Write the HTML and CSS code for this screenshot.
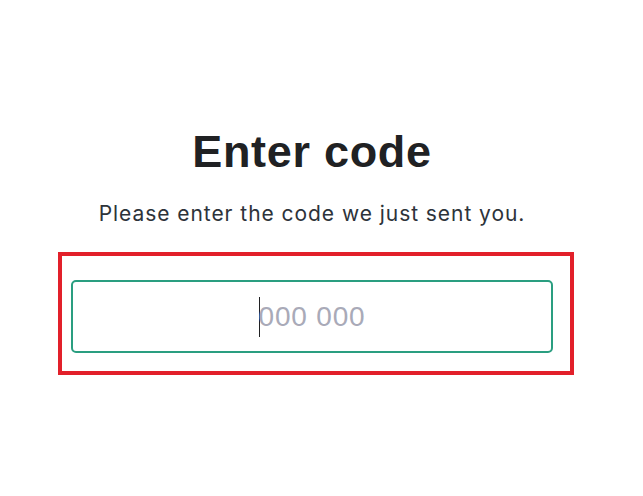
FILE: index.html
```html
<!DOCTYPE html>
<html lang="en">
<head>
<meta charset="utf-8">
<title>Enter code</title>
<link rel="stylesheet" href="styles.css">
</head>
<body>
<main class="page">
  <h1 class="title">Enter code</h1>
  <p class="subtitle">Please enter the code we just sent you.</p>
  <div class="highlight">
    <div class="code-field">
      <span class="caret"></span><span class="placeholder">000 000</span>
    </div>
  </div>
</main>
</body>
</html>
```

FILE: styles.css
```css
html, body {
  margin: 0;
  padding: 0;
  background: #ffffff;
}

body {
  font-family: "Liberation Sans", Arial, sans-serif;
}

.page {
  display: flex;
  flex-direction: column;
  align-items: center;
  padding: 125px 19px 0 0;
}

.title {
  margin: 0;
  font-size: 45px;
  line-height: 54px;
  font-weight: 700;
  color: #202123;
  letter-spacing: 0.7px;
}

.subtitle {
  margin: 21px 0 0;
  font-family: Inter, "Liberation Sans", sans-serif;
  font-size: 21px;
  line-height: 28px;
  color: #2d333a;
  letter-spacing: 0.95px;
}

.highlight {
  margin: 24px 0 0 8px;
  width: 516px;
  box-sizing: border-box;
  border: 4px solid #e2202a;
  padding: 24px 17px 18px 9px;
}

.code-field {
  box-sizing: border-box;
  width: 482px;
  height: 73px;
  border: 2px solid #2a9e80;
  border-radius: 5px;
  display: flex;
  align-items: center;
  justify-content: center;
}

.caret {
  display: inline-block;
  width: 1px;
  height: 40px;
  background: #202123;
  margin-right: -1px;
}

.placeholder {
  font-size: 28px;
  line-height: 40px;
  color: #a9aab8;
  letter-spacing: 0.8px;
}
```
